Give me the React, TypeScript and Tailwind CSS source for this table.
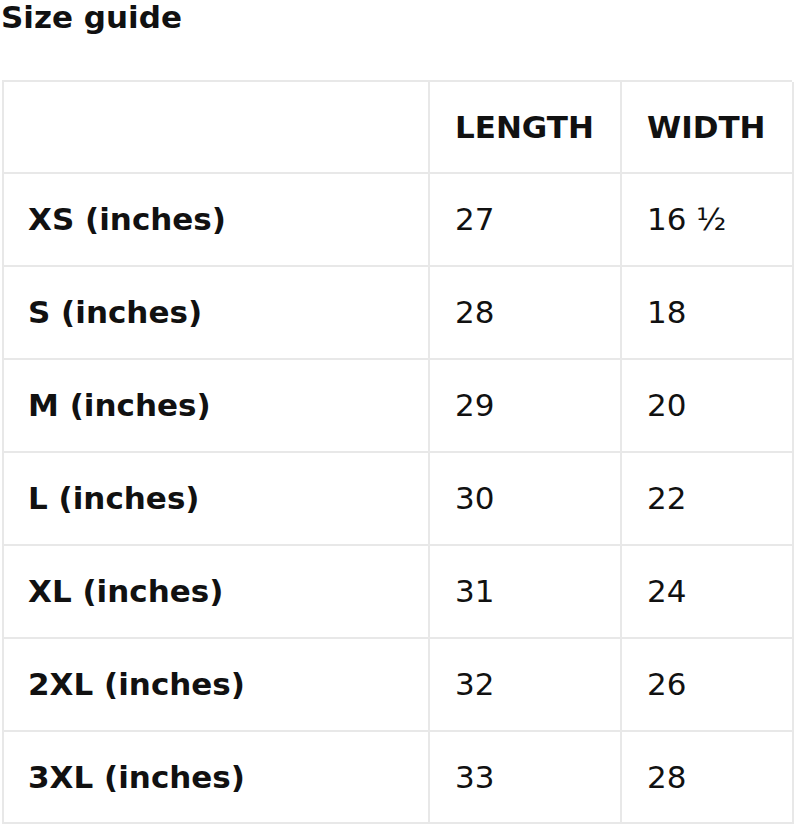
import React from "react";

const rows: [string, string, string][] = [
  ["XS (inches)", "27", "16 ½"],
  ["S (inches)", "28", "18"],
  ["M (inches)", "29", "20"],
  ["L (inches)", "30", "22"],
  ["XL (inches)", "31", "24"],
  ["2XL (inches)", "32", "26"],
  ["3XL (inches)", "33", "28"],
];

export default function App() {
  return (
    <div
      className="w-[794px] h-[824px] bg-white text-[#111] overflow-hidden"
      style={{ fontFamily: '"DejaVu Sans", Verdana, sans-serif' }}
    >
      <h1 className="text-[31px] leading-[34px] font-bold pl-[1px]">Size guide</h1>
      <div className="mt-[46px] ml-[2px] w-[790px] grid grid-cols-[426px_192px_172px] border-l-2 border-t-2 border-[#e8e8e8]">
        <div className="h-[92px] border-r-2 border-b-2 border-[#e8e8e8]" />
        <div className="h-[92px] border-r-2 border-b-2 border-[#e8e8e8] flex items-center pl-[25px] text-[31px] font-bold">
          LENGTH
        </div>
        <div className="h-[92px] border-r-2 border-b-2 border-[#e8e8e8] flex items-center pl-[25px] text-[31px] font-bold">
          WIDTH
        </div>
        {rows.map(([a, b, c], i) => (
          <React.Fragment key={a}>
            <div
              className={`${i === rows.length - 1 ? "h-[92px]" : "h-[93px]"} border-r-2 border-b-2 border-[#e8e8e8] flex items-center pl-[24px] text-[31px] font-bold`}
            >
              {a}
            </div>
            <div
              className={`${i === rows.length - 1 ? "h-[92px]" : "h-[93px]"} border-r-2 border-b-2 border-[#e8e8e8] flex items-center pl-[25px] text-[31px]`}
            >
              {b}
            </div>
            <div
              className={`${i === rows.length - 1 ? "h-[92px]" : "h-[93px]"} border-r-2 border-b-2 border-[#e8e8e8] flex items-center pl-[25px] text-[31px]`}
            >
              {c}
            </div>
          </React.Fragment>
        ))}
      </div>
    </div>
  );
}
